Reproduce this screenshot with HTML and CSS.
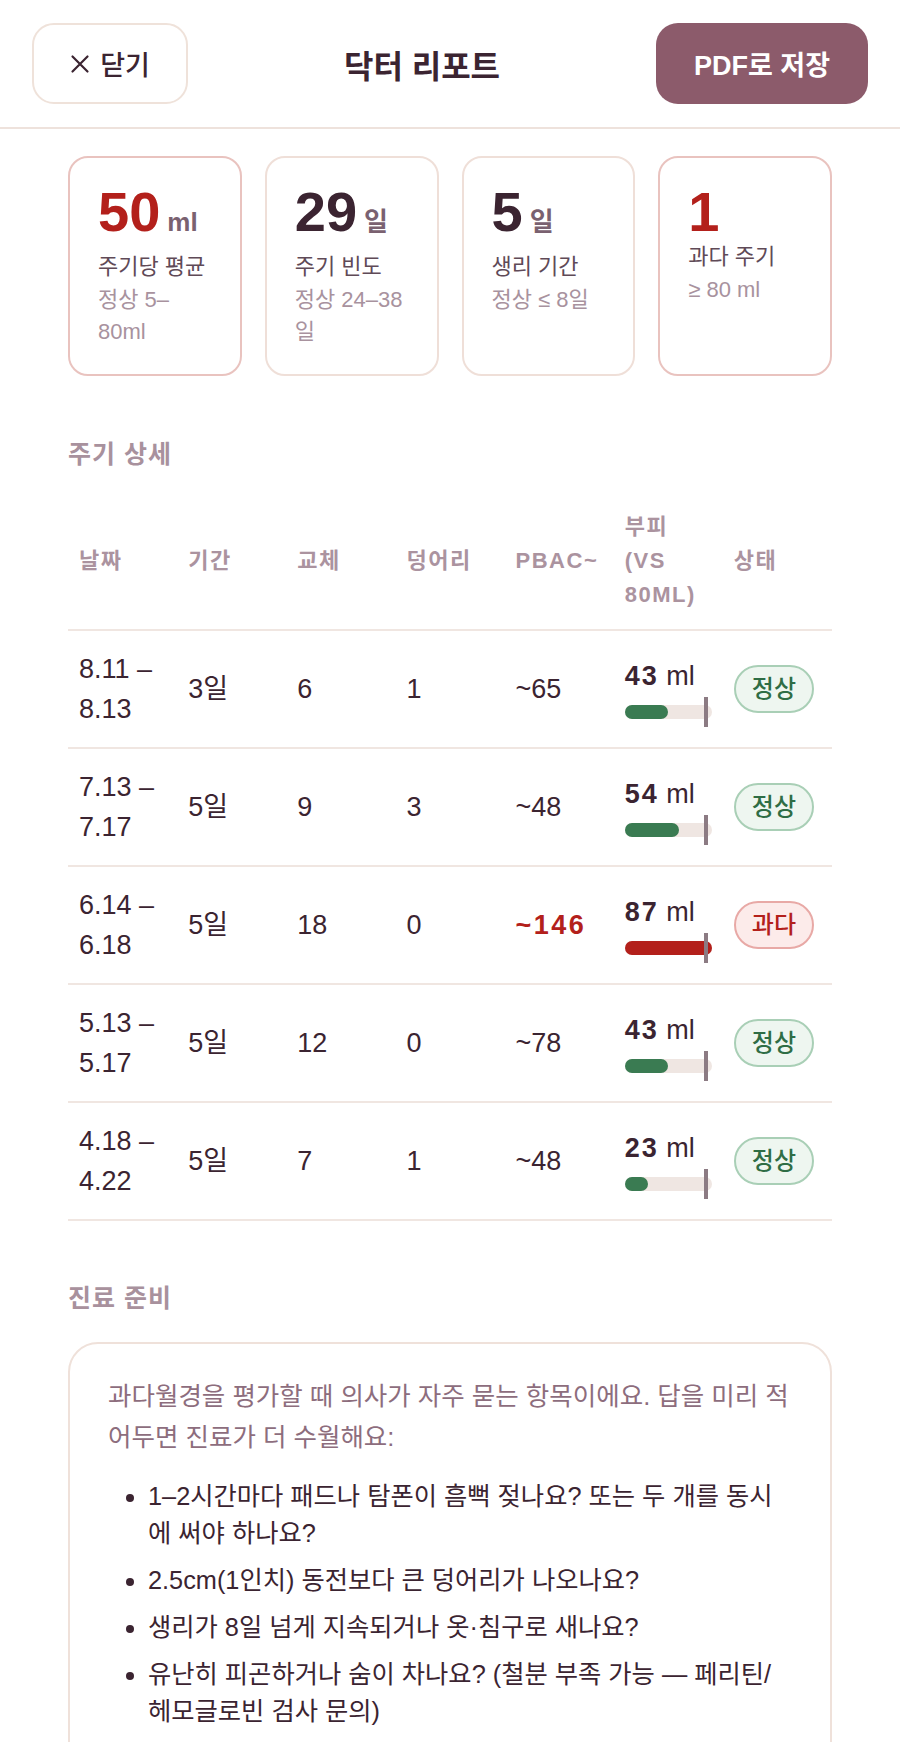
FILE: index.html
```html
<!DOCTYPE html>
<html lang="ko">
  <head>
    <meta charset="utf-8" />
    <title>닥터 리포트</title>
    <link rel="stylesheet" href="styles.css">
  </head>
  <body>
    <div id="topbar">
      <button class="btn-close">
        <svg width="20" height="20" viewBox="0 0 20 20">
          <path d="M2.5 2.5 L17.5 17.5 M17.5 2.5 L2.5 17.5" stroke="#3b2431" stroke-width="2.2" stroke-linecap="round" fill="none" />
        </svg>
        닫기
      </button>
      <h1>닥터 리포트</h1>
      <button class="btn-pdf">PDF로 저장</button>
    </div>

    <div id="content">
      <div class="stats">
        <div class="stat alert">
          <div class="stat-num red">50<span class="unit">ml</span></div>
          <div class="stat-label">주기당 평균</div>
          <div class="stat-sub">정상 5–80ml</div>
        </div>
        <div class="stat">
          <div class="stat-num">29<span class="unit">일</span></div>
          <div class="stat-label">주기 빈도</div>
          <div class="stat-sub">정상 24–38일</div>
        </div>
        <div class="stat">
          <div class="stat-num">5<span class="unit">일</span></div>
          <div class="stat-label">생리 기간</div>
          <div class="stat-sub">정상 ≤ 8일</div>
        </div>
        <div class="stat alert">
          <div class="stat-num red">1</div>
          <div class="stat-label">과다 주기</div>
          <div class="stat-sub">≥ 80 ml</div>
        </div>
      </div>

      <h2>주기 상세</h2>
      <table class="cycles">
        <thead>
          <tr>
            <th>날짜</th>
            <th>기간</th>
            <th>교체</th>
            <th>덩어리</th>
            <th>PBAC~</th>
            <th>부피 (vs 80ml)</th>
            <th>상태</th>
          </tr>
        </thead>
        <tbody>
          <tr>
            <td>8.11 – 8.13</td>
            <td>3일</td>
            <td>6</td>
            <td>1</td>
            <td>~65</td>
            <td>
              <div class="vol"><b>43</b> ml</div>
              <div class="track"><div class="fill" style="width: 49.4%"></div><div class="mark"></div></div>
            </td>
            <td><span class="pill ok">정상</span></td>
          </tr>
          <tr>
            <td>7.13 – 7.17</td>
            <td>5일</td>
            <td>9</td>
            <td>3</td>
            <td>~48</td>
            <td>
              <div class="vol"><b>54</b> ml</div>
              <div class="track"><div class="fill" style="width: 62.1%"></div><div class="mark"></div></div>
            </td>
            <td><span class="pill ok">정상</span></td>
          </tr>
          <tr>
            <td>6.14 – 6.18</td>
            <td>5일</td>
            <td>18</td>
            <td>0</td>
            <td class="hot">~146</td>
            <td>
              <div class="vol"><b>87</b> ml</div>
              <div class="track"><div class="fill over" style="width: 100%"></div><div class="mark"></div></div>
            </td>
            <td><span class="pill heavy">과다</span></td>
          </tr>
          <tr>
            <td>5.13 – 5.17</td>
            <td>5일</td>
            <td>12</td>
            <td>0</td>
            <td>~78</td>
            <td>
              <div class="vol"><b>43</b> ml</div>
              <div class="track"><div class="fill" style="width: 49.4%"></div><div class="mark"></div></div>
            </td>
            <td><span class="pill ok">정상</span></td>
          </tr>
          <tr>
            <td>4.18 – 4.22</td>
            <td>5일</td>
            <td>7</td>
            <td>1</td>
            <td>~48</td>
            <td>
              <div class="vol"><b>23</b> ml</div>
              <div class="track"><div class="fill" style="width: 26.4%"></div><div class="mark"></div></div>
            </td>
            <td><span class="pill ok">정상</span></td>
          </tr>
        </tbody>
      </table>

      <h2 class="prep-title">진료 준비</h2>
      <div class="prep">
        <p>과다월경을 평가할 때 의사가 자주 묻는 항목이에요. 답을 미리 적어두면 진료가 더 수월해요:</p>
        <ul>
          <li>1–2시간마다 패드나 탐폰이 흠뻑 젖나요? 또는 두 개를 동시에 써야 하나요?</li>
          <li>2.5cm(1인치) 동전보다 큰 덩어리가 나오나요?</li>
          <li>생리가 8일 넘게 지속되거나 옷·침구로 새나요?</li>
          <li>유난히 피곤하거나 숨이 차나요? (철분 부족 가능 — 페리틴/헤모글로빈 검사 문의)</li>
        </ul>
      </div>
    </div>
  </body>
</html>
```

FILE: styles.css
```css
body {
  margin: 0;
  background-color: white;
  color: #3b2431;
  font-family: "Liberation Sans", "Noto Sans CJK KR", sans-serif;
}

#topbar {
  display: flex;
  align-items: center;
  padding: 23px 32px;
  border-bottom: 2px solid #eee2dc;
}

#topbar h1 {
  flex: 1;
  margin: 0;
  text-align: center;
  font-size: 32px;
  font-weight: 600;
}

#topbar button {
  height: 81px;
  border-radius: 22px;
  font-family: inherit;
  font-size: 27px;
  cursor: pointer;
}

.btn-close {
  width: 156px;
  display: flex;
  align-items: center;
  justify-content: center;
  gap: 10px;
  background: white;
  border: 2px solid #efe2da;
  color: #3b2431;
  font-weight: 500;
}

.btn-pdf {
  width: 212px;
  background: #8c5b6b;
  border: none;
  color: white;
  font-weight: 700;
}

#content {
  padding: 0 68px;
}

.stats {
  display: grid;
  grid-template-columns: repeat(4, 1fr);
  gap: 23px;
  margin-top: 27px;
}

.stat {
  border: 2px solid #efdfd8;
  border-radius: 20px;
  padding: 29px 28px 26px 28px;
}

.stat.alert {
  border-color: #e9c3bf;
}

.stat-num {
  font-size: 56px;
  font-weight: 700;
  line-height: 50px;
  color: #3b2431;
}

.stat-num.red {
  color: #b3201b;
}

.unit {
  font-size: 26px;
  font-weight: 700;
  color: #7a6170;
  margin-left: 7px;
}

.stat-label {
  margin-top: 3px;
  font-size: 22px;
  line-height: 34px;
  color: #5f4a57;
}

.stat-sub {
  font-size: 22px;
  line-height: 32px;
  color: #a8929e;
}

h2 {
  margin: 63px 0 24px;
  font-size: 25px;
  line-height: 30px;
  font-weight: 700;
  letter-spacing: 1px;
  color: #a8919d;
}

.cycles {
  width: 100%;
  table-layout: fixed;
  border-collapse: collapse;
}

.cycles th {
  padding: 17px 11px;
  text-align: left;
  font-size: 22px;
  line-height: 34px;
  font-weight: 700;
  letter-spacing: 1.5px;
  text-transform: uppercase;
  color: #ab939f;
  border-bottom: 2px solid #f0e6e1;
}

.cycles td {
  padding: 18px 11px;
  font-size: 27px;
  line-height: 40px;
  vertical-align: middle;
  border-bottom: 2px solid #f0e6e1;
}

.cycles td.hot {
  color: #b3201b;
  font-weight: 700;
  letter-spacing: 2.5px;
}

.vol {
  font-size: 27px;
  line-height: 34px;
}

.vol b {
  letter-spacing: 2px;
}

.track {
  position: relative;
  margin-top: 12px;
  height: 14px;
  border-radius: 7px;
  background: #efe6e2;
}

.fill {
  height: 100%;
  border-radius: 7px;
  background: #3a7b52;
}

.fill.over {
  background: #b3201b;
}

.mark {
  position: absolute;
  left: calc(92% - 1px);
  top: -8px;
  width: 4px;
  height: 30px;
  background: #8c7b83;
}

.pill {
  display: inline-block;
  padding: 5px 16px;
  border-radius: 30px;
  font-size: 24px;
  line-height: 34px;
  font-weight: 500;
}

.pill.ok {
  background: #eef6f0;
  border: 2px solid #a9cfb6;
  color: #2f6d45;
}

.pill.heavy {
  background: #fcebea;
  border: 2px solid #e8a9a6;
  color: #b3201b;
}

.prep-title {
  margin: 62px 0 29px;
}

.prep {
  border: 2px solid #efe1da;
  border-radius: 30px;
  padding: 32px 38px;
}

.prep p {
  margin: 0;
  font-size: 25.5px;
  line-height: 41px;
  color: #8d6d7d;
}

.prep ul {
  margin: 20px 0 0;
  padding-left: 40px;
}

.prep li {
  font-size: 25.3px;
  line-height: 37px;
  margin-bottom: 10px;
}
```
